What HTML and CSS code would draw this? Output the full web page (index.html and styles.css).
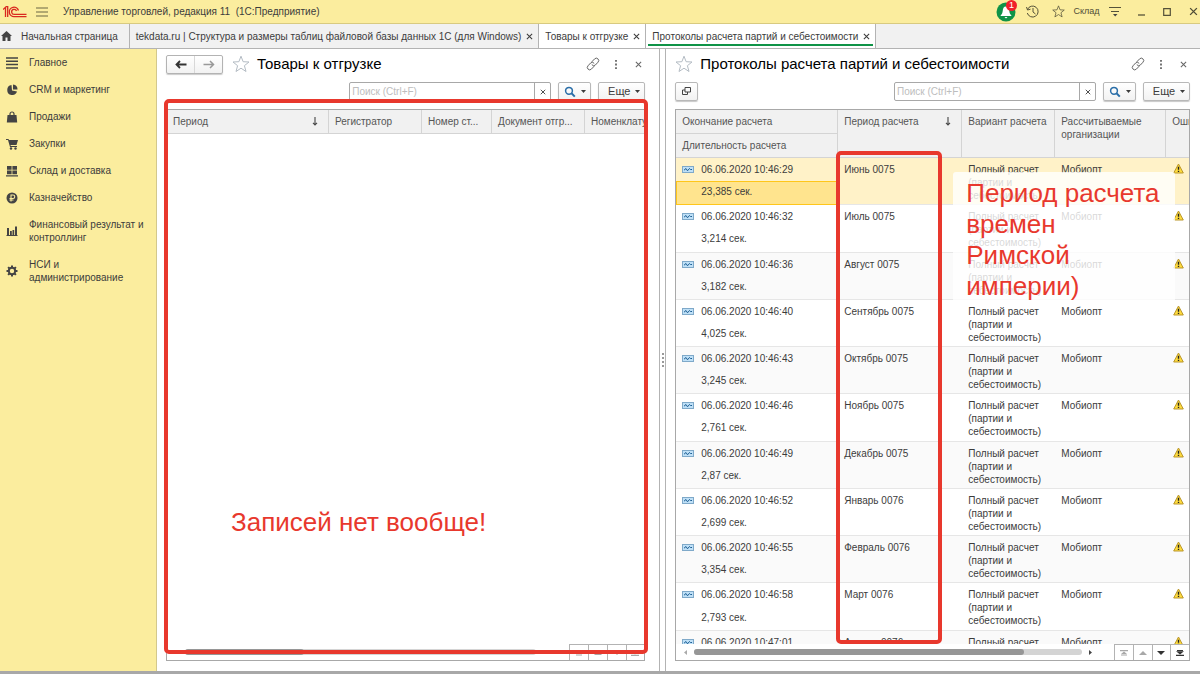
FILE: index.html
```html
<!DOCTYPE html>
<html lang="ru">
<head>
    <meta charset="UTF-8">
    <meta name="viewport" content="width=device-width, initial-scale=1.0">
    <title>Управление торговлей, редакция 11</title>
    <link rel="stylesheet" href="styles.css">
</head>
<body>
    <!-- Общие иконки -->
    <svg class="sprite" aria-hidden="true">
        <symbol id="i-star" viewBox="0 0 18 18"><path d="M9 1.2l2.1 5.5 5.9.3-4.6 3.7 1.6 5.8L9 13.2l-5 3.3 1.6-5.8L1 7l5.9-.3z" fill="none" stroke="currentColor" stroke-linejoin="miter"/></symbol>
        <symbol id="i-link" viewBox="0 0 14 14"><g fill="none" stroke="currentColor" stroke-linecap="round"><path d="M6 4.6l2.6-2.7a2.3 2.3 0 0 1 3.4 3.3L9.4 8a2.3 2.3 0 0 1-3.3 0"/><path d="M8 9.4l-2.6 2.7A2.3 2.3 0 0 1 2 8.8L4.6 6a2.3 2.3 0 0 1 3.3 0"/></g></symbol>
        <symbol id="i-dots" viewBox="0 0 4 10"><path d="M1 0h2v2H1zM1 4h2v2H1zM1 8h2v2H1z" fill="currentColor"/></symbol>
        <symbol id="i-close" viewBox="0 0 8 8"><path d="M1 1l6 6M7 1L1 7" fill="none" stroke="currentColor" stroke-width="1.2"/></symbol>
        <symbol id="i-search" viewBox="0 0 12 12"><circle cx="5" cy="4.8" r="3.4" fill="none" stroke="#2a6ea8" stroke-width="1.5"/><path d="M7.5 7.3L10.8 10.6" stroke="#2a6ea8" stroke-width="2"/></symbol>
        <symbol id="i-caret" viewBox="0 0 5 3"><path d="M0 0h5L2.5 3z" fill="currentColor"/></symbol>
        <symbol id="i-sort" viewBox="0 0 6 9"><path d="M3 0v8M1 5.8l2 2.2 2-2.2" fill="none" stroke="#444" stroke-width="1.1"/></symbol>
        <symbol id="i-record" viewBox="0 0 12 7"><rect x=".5" y=".5" width="11" height="6" fill="#bfe0f7" stroke="#7fa9c9"/><path d="M2 4.2L4 2.5 5.5 4.8 7.5 2.5 8.5 3.5H10" fill="none" stroke="#1d5f94"/></symbol>
        <symbol id="i-warn" viewBox="0 0 11 11"><path d="M5.5 1L10.3 10H.7z" fill="#ffdc3c" stroke="#b9952a" stroke-linejoin="round"/><path d="M5.5 3.8v3M5.5 7.7v1.3" stroke="#222" stroke-width="1.4"/></symbol>
        <symbol id="i-first" viewBox="0 0 8 6"><path d="M0 0h8v1.2H0zM4 1.5L7 4H1zM1 4.5h6v1H1z" fill="currentColor"/></symbol>
        <symbol id="i-up" viewBox="0 0 8 6"><path d="M4 1l4 4H0z" fill="currentColor"/></symbol>
        <symbol id="i-down" viewBox="0 0 8 6"><path d="M4 5L0 1h8z" fill="currentColor"/></symbol>
        <symbol id="i-last" viewBox="0 0 8 6"><path d="M0 4.8h8V6H0zM4 4.5L0 1.2h8zM1 0h6v1H1z" fill="currentColor"/></symbol>
    </svg>

    <header class="titlebar">
        <svg class="logo" width="24" height="12" viewBox="0 0 24 12"><g fill="none" stroke="#d9281f" stroke-width="1.3"><path d="M0 3.5L2.5 1.3V11M4.7 11V.7H2.8"/><path d="M15.5 4.5A4.7 4.7 0 1 0 11.3 10.6H23.5"/><path d="M13.5 5A2.5 2.5 0 1 0 11.3 8.4H23.5"/></g></svg>
        <button class="icon-button menu-button" aria-label="Меню"><svg width="12" height="10" viewBox="0 0 12 10"><path d="M0 1h12M0 5h12M0 9h12" stroke="#6b6745" stroke-width="1.2"/></svg></button>
        <h1 class="app-title">Управление торговлей, редакция 11&nbsp; (1С:Предприятие)</h1>
        <div class="titlebar-tools">
            <button class="tool bell" aria-label="Уведомления">
                <svg width="20" height="20" viewBox="0 0 20 20"><circle cx="10" cy="10" r="9.5" fill="#0f9347"/><path d="M10 4.5c2.5 0 3 2 3.3 4.5.2 2 .8 3.3 2 4.2v.8H4.700v-.8c1.200-.9 1.800-2.200 2-4.200C7 6.500 7.500 4.500 10 4.500zM8.500 15h3l-1.500 1.500z" fill="#fff"/></svg>
                <span class="badge">1</span>
            </button>
            <button class="tool" aria-label="История"><svg width="13" height="13" viewBox="0 0 13 13"><path d="M1.5 4.5A5.5 5.5 0 1 1 1.3 8M.5 2l1 3 3-.8M7 3v4l2.5 2" fill="none" stroke="#555239"/></svg></button>
            <button class="tool" aria-label="Избранное"><svg width="13" height="13"><use href="#i-star"/></svg></button>
            <button class="tool user">Склад</button>
            <button class="tool" aria-label="Настройки"><svg width="12" height="11" viewBox="0 0 12 11"><path d="M0 1.5h12M2 5.5h8" stroke="#555239"/><path d="M4 8h4.5L6.2 10.5z" fill="#444"/></svg></button>
            <button class="tool" aria-label="Свернуть"><svg width="8" height="9" viewBox="0 0 8 9"><path d="M1 8h7" stroke="#555239" stroke-width="1.3"/></svg></button>
            <button class="tool" aria-label="Развернуть"><svg width="8" height="8" viewBox="0 0 8 8"><path d="M.7.7h6.6v6.6H.7z" fill="none" stroke="#555239" stroke-width="1.2"/></svg></button>
            <button class="tool" aria-label="Закрыть"><svg width="9" height="9"><use href="#i-close"/></svg></button>
        </div>
    </header>

    <nav class="tabs">
        <div class="tab home">
            <svg width="11" height="10" viewBox="0 0 11 10"><path d="M5.5 0L11 5H9.5v5h-3V6.5h-2V10h-3V5H0z" fill="#444"/></svg>
            <button class="tab-label">Начальная страница</button>
        </div>
        <div class="tab">
            <button class="tab-label">tekdata.ru | Структура и размеры таблиц файловой базы данных 1С (для Windows)</button>
            <button class="icon-button" aria-label="Закрыть"><svg width="7" height="7"><use href="#i-close"/></svg></button>
        </div>
        <div class="tab open">
            <button class="tab-label">Товары к отгрузке</button>
            <button class="icon-button" aria-label="Закрыть"><svg width="7" height="7"><use href="#i-close"/></svg></button>
        </div>
        <div class="tab open active">
            <button class="tab-label">Протоколы расчета партий и себестоимости</button>
            <button class="icon-button" aria-label="Закрыть"><svg width="7" height="7"><use href="#i-close"/></svg></button>
        </div>
    </nav>

    <div class="workspace">
        <aside class="sidebar">
            <a href="#" class="section"><svg width="12" height="12" viewBox="0 0 12 12"><path d="M0 1h12M0 4.3h12M0 7.6h12M0 11h12" stroke="#444" stroke-width="1.5"/></svg>Главное</a>
            <a href="#" class="section"><svg width="12" height="12" viewBox="0 0 12 12"><path d="M5.5 1A5 5 0 1 0 11 7.5L6 6.5z" fill="#444"/><path d="M7 .5A5 5 0 0 1 11.5 5.5H7z" fill="#444"/></svg>CRM и маркетинг</a>
            <a href="#" class="section"><svg width="12" height="12" viewBox="0 0 12 12"><path d="M1.5 4h9l.7 7.5H.8z" fill="#444"/><path d="M4 5V3a2 2 0 0 1 4 0v2" fill="none" stroke="#444" stroke-width="1.2"/></svg>Продажи</a>
            <a href="#" class="section"><svg width="12" height="12" viewBox="0 0 12 12"><path d="M0 1h2.5l.5 1h9l-1.5 5H4.5l.3 1H11v1H4L2 2H0z" fill="#444"/><circle cx="5" cy="10.5" r="1.2" fill="#444"/><circle cx="9.5" cy="10.5" r="1.2" fill="#444"/></svg>Закупки</a>
            <a href="#" class="section"><svg width="12" height="12" viewBox="0 0 12 12"><path d="M1 1h4.6v3.7H1zM6.4 1H11v3.7H6.4zM1 5.5h4.6v3.7H1zM6.4 5.5H11v3.7H6.4zM0 10.2h12v1.3H0z" fill="#444"/></svg>Склад и доставка</a>
            <a href="#" class="section"><svg width="12" height="12" viewBox="0 0 12 12"><circle cx="6" cy="6" r="5.5" fill="#444"/><path d="M5 9.5V3h2a1.700 1.700 0 0 1 0 3.500H3.500M3.500 8h4" fill="none" stroke="#fbed9e" stroke-width="1.1"/></svg>Казначейство</a>
            <a href="#" class="section"><svg width="12" height="12" viewBox="0 0 12 12"><path d="M1 3h2v7H1zM4 6h1.8v4H4zM6.5 5h1.7v5H6.5zM9 1.5h2V10H9zM.5 10h11v1H.5z" fill="#444"/></svg>Финансовый результат и контроллинг</a>
            <a href="#" class="section"><svg width="12" height="12" viewBox="0 0 12 12"><circle cx="6" cy="6" r="3.2" fill="none" stroke="#444" stroke-width="2"/><path d="M6 .5v2M6 9.5v2M.5 6h2M9.5 6h2M2.1 2.1l1.4 1.4M8.5 8.5l1.4 1.4M2.1 9.9l1.4-1.4M8.5 3.5l1.4-1.4" stroke="#444" stroke-width="2"/></svg>НСИ и администрирование</a>
        </aside>

        <main class="panels">
            <section class="panel shipments">
                <div class="panel-head">
                    <div class="history">
                        <button aria-label="Назад"><svg width="12" height="9" viewBox="0 0 12 9"><path d="M11.5 4.5H1.5M5 1L1.5 4.5 5 8" fill="none" stroke="#333" stroke-width="1.8"/></svg></button>
                        <button aria-label="Вперед" class="off"><svg width="12" height="9" viewBox="0 0 12 9"><path d="M.5 4.5h10M7 1l3.5 3.5L7 8" fill="none" stroke="#999" stroke-width="1.5"/></svg></button>
                    </div>
                    <button class="icon-button star" aria-label="В избранное"><svg width="18" height="18"><use href="#i-star"/></svg></button>
                    <h2>Товары к отгрузке</h2>
                    <div class="panel-tools">
                        <button class="icon-button" aria-label="Ссылка"><svg width="14" height="14"><use href="#i-link"/></svg></button>
                        <button class="icon-button" aria-label="Еще"><svg width="4" height="9"><use href="#i-dots"/></svg></button>
                        <button class="icon-button" aria-label="Закрыть"><svg width="7" height="7"><use href="#i-close"/></svg></button>
                    </div>
                </div>
                <div class="toolbar">
                    <div class="search">
                        <input type="text" placeholder="Поиск (Ctrl+F)" aria-label="Поиск">
                        <button aria-label="Очистить"><svg width="6" height="6"><use href="#i-close"/></svg></button>
                    </div>
                    <button class="btn find" aria-label="Найти"><svg width="12" height="12"><use href="#i-search"/></svg><svg width="5" height="3"><use href="#i-caret"/></svg></button>
                    <button class="btn more">Еще<svg width="5" height="3"><use href="#i-caret"/></svg></button>
                </div>
                <div class="list">
                    <div class="list-view">
                        <table class="grid">
                            <colgroup><col class="w-date"><col class="w-reg"><col class="w-num"><col class="w-doc"><col class="w-item"></colgroup>
                            <thead>
                                <tr>
                                    <th><span class="sorted">Период<svg width="6" height="9"><use href="#i-sort"/></svg></span></th>
                                    <th>Регистратор</th>
                                    <th>Номер ст...</th>
                                    <th>Документ отгр...</th>
                                    <th>Номенклатура</th>
                                </tr>
                            </thead>
                        </table>
                    </div>
                    <div class="list-foot">
                        <div class="scroll"><span class="track"><span class="thumb short"></span></span></div>
                        <div class="pager off">
                            <button aria-label="В начало"><svg width="8" height="6"><use href="#i-first"/></svg></button>
                            <button aria-label="Вверх"><svg width="8" height="6"><use href="#i-up"/></svg></button>
                            <button aria-label="Вниз"><svg width="8" height="6"><use href="#i-down"/></svg></button>
                            <button aria-label="В конец"><svg width="8" height="6"><use href="#i-last"/></svg></button>
                        </div>
                    </div>
                </div>
                <div class="mark mark-list"></div>
                <p class="note note-empty">Записей нет вообще!</p>
            </section>

            <div class="splitter"><i></i><i></i><i></i><i></i></div>

            <section class="panel protocols">
                <div class="panel-head">
                    <button class="icon-button star" aria-label="В избранное"><svg width="18" height="18"><use href="#i-star"/></svg></button>
                    <h2>Протоколы расчета партий и себестоимости</h2>
                    <div class="panel-tools">
                        <button class="icon-button" aria-label="Ссылка"><svg width="14" height="14"><use href="#i-link"/></svg></button>
                        <button class="icon-button" aria-label="Еще"><svg width="4" height="9"><use href="#i-dots"/></svg></button>
                        <button class="icon-button" aria-label="Закрыть"><svg width="7" height="7"><use href="#i-close"/></svg></button>
                    </div>
                </div>
                <div class="toolbar">
                    <button class="btn copy" aria-label="Открыть"><svg width="9" height="9" viewBox="0 0 9 9"><path d="M3 .5h5.5v4.5H3zM5.5 5v2.5h-5V3H3" fill="none" stroke="#444"/></svg></button>
                    <div class="search">
                        <input type="text" placeholder="Поиск (Ctrl+F)" aria-label="Поиск">
                        <button aria-label="Очистить"><svg width="6" height="6"><use href="#i-close"/></svg></button>
                    </div>
                    <button class="btn find" aria-label="Найти"><svg width="12" height="12"><use href="#i-search"/></svg><svg width="5" height="3"><use href="#i-caret"/></svg></button>
                    <button class="btn more">Еще<svg width="5" height="3"><use href="#i-caret"/></svg></button>
                </div>
                <div class="list">
                    <div class="list-view">
                        <table class="grid records" id="records">
                            <colgroup><col class="w-end"><col class="w-period"><col class="w-kind"><col class="w-org"><col class="w-err"></colgroup>
                            <thead>
                                <tr>
                                    <th>Окончание расчета</th>
                                    <th rowspan="2"><span class="sorted">Период расчета<svg width="6" height="9"><use href="#i-sort"/></svg></span></th>
                                    <th rowspan="2">Вариант расчета</th>
                                    <th rowspan="2">Рассчитываемые организации</th>
                                    <th rowspan="2">Ошибки</th>
                                </tr>
                                <tr><th>Длительность расчета</th></tr>
                            </thead>
                        </table>
                    </div>
                    <div class="list-foot">
                        <div class="scroll"><svg width="3" height="5" viewBox="0 0 3 5"><path d="M3 0v5L0 2.5z" fill="#aaa"/></svg><span class="track"><span class="thumb"></span></span><svg width="3" height="5" viewBox="0 0 3 5"><path d="M0 0v5l3-2.5z" fill="#444"/></svg></div>
                        <div class="pager">
                            <button class="off" aria-label="В начало"><svg width="8" height="6"><use href="#i-first"/></svg></button>
                            <button class="off" aria-label="Вверх"><svg width="8" height="6"><use href="#i-up"/></svg></button>
                            <button aria-label="Вниз"><svg width="8" height="6"><use href="#i-down"/></svg></button>
                            <button aria-label="В конец"><svg width="8" height="6"><use href="#i-last"/></svg></button>
                        </div>
                    </div>
                </div>
                <div class="mark mark-period"></div>
                <p class="note note-period">Период расчета времен Римской империи)</p>
            </section>
        </main>
    </div>

    <script src="script.js"></script>
</body>
</html>
```

FILE: styles.css
```css
* {
    box-sizing: border-box;
}

body {
    margin: 0;
    height: 100vh;
    display: flex;
    flex-direction: column;
    overflow: hidden;
    font-family: "Liberation Sans", Arial, sans-serif;
    font-size: 10px;
    line-height: 13px;
    color: #3c3c3c;
    background: #ffffff;
    border-bottom: 3px solid #a8a8a8;
}

h1, h2, p {
    margin: 0;
    font-weight: normal;
}

button, input {
    font: inherit;
    color: inherit;
    margin: 0;
    padding: 0;
    border: none;
    background: none;
}

svg {
    display: block;
    flex: none;
}

.sprite {
    position: absolute;
    width: 0;
    height: 0;
}

.icon-button {
    display: flex;
    align-items: center;
    justify-content: center;
}

/* Заголовок окна */
.titlebar {
    flex: none;
    display: flex;
    align-items: center;
    height: 24px;
    padding-left: 3px;
    background: #fbed9e;
    border-bottom: 1px solid #d8ca80;
    overflow: hidden;
}

.menu-button {
    margin: 0 15px 0 9px;
}

.app-title {
    font-size: 10px;
}

.titlebar-tools {
    display: flex;
    margin-left: auto;
    margin-right: -6px;
}

.tool {
    width: 26px;
    height: 23px;
    display: flex;
    align-items: center;
    justify-content: center;
    color: #4f4c36;
}

.tool.user {
    width: 31px;
    font-size: 9px;
}

.bell {
    position: relative;
}

.badge {
    position: absolute;
    top: 0;
    right: 2px;
    width: 11px;
    height: 11px;
    border-radius: 50%;
    background: #f0202a;
    color: #ffffff;
    font-size: 9px;
    line-height: 11px;
    text-align: center;
}

/* Вкладки */
.tabs {
    flex: none;
    display: flex;
    height: 25px;
    background: #f1f1f1;
    border-bottom: 1px solid #b3b3b3;
}

.tab {
    position: relative;
    display: flex;
    align-items: center;
    gap: 5px;
    padding: 0 5px 0 6px;
    border-right: 1px solid #b3b3b3;
    white-space: nowrap;
}

.tab.home {
    gap: 9px;
    padding: 0 11px 0 1px;
}

.tab.open {
    background: #ffffff;
}

.tab.active::after {
    content: "";
    position: absolute;
    left: 2px;
    right: 2px;
    bottom: 2px;
    height: 2px;
    background: #0f9347;
}

/* Рабочая область */
.workspace {
    flex: 1;
    min-height: 0;
    display: flex;
}

.sidebar {
    flex: none;
    width: 157px;
    background: #fbed9e;
    border-right: 1px solid #d3c88c;
}

.section {
    display: flex;
    align-items: center;
    gap: 11px;
    padding: 7px 8px 7px 6px;
    color: #3c3c3c;
    text-decoration: none;
}

.panels {
    flex: 1;
    min-width: 0;
    display: flex;
}

.panel {
    position: relative;
    display: flex;
    flex-direction: column;
    gap: 8px;
    min-width: 0;
    padding: 5px 10px 10px 9px;
}

.shipments {
    flex: 500;
    padding-right: 14px;
}

.protocols {
    flex: 537;
}

.splitter {
    flex: none;
    width: 7px;
    display: flex;
    flex-direction: column;
    align-items: center;
    justify-content: center;
    gap: 2px;
    border: solid #b3b3b3;
    border-width: 0 1px;
}

.splitter i {
    width: 2px;
    height: 2px;
    background: #999999;
}

.panel-head {
    flex: none;
    display: flex;
    align-items: center;
    height: 20px;
}

.panel-head h2 {
    margin-left: 7px;
    font-size: 15px;
    line-height: 20px;
    color: #000000;
    white-space: nowrap;
}

.star {
    color: #b4bcc4;
}

.history {
    display: flex;
    width: 57px;
    height: 19px;
    margin-right: 9px;
    border: 1px solid #b3b3b3;
    border-radius: 2px;
    background: linear-gradient(#ffffff, #f2f2f2);
    box-shadow: 0 1px 1px #cccccc;
}

.history button {
    flex: 1;
    display: flex;
    align-items: center;
    justify-content: center;
}

.history .off {
    border-left: 1px solid #d8d8d8;
}

.panel-tools {
    display: flex;
    margin-left: auto;
    margin-right: -5px;
    color: #666666;
}

.panel-tools .icon-button {
    width: 23px;
}

.toolbar {
    flex: none;
    display: flex;
    justify-content: flex-end;
    gap: 7px;
    height: 19px;
}

.search {
    display: flex;
    width: 202px;
    border: 1px solid #a8a8a8;
    border-radius: 2px;
}

.search input {
    flex: 1;
    min-width: 0;
    padding-left: 2px;
}

.search input::placeholder {
    color: #bdbdbd;
}

.search button {
    width: 16px;
    display: flex;
    align-items: center;
    justify-content: center;
    border-left: 1px solid #a8a8a8;
}

.btn {
    display: flex;
    align-items: center;
    justify-content: center;
    gap: 5px;
    border: 1px solid #b8b8b8;
    border-radius: 2px;
    background: linear-gradient(#ffffff, #f2f2f2);
    box-shadow: 0 1px 1px #c8c8c8;
}

.find {
    width: 33px;
}

.more {
    width: 47px;
    font-size: 11px;
    padding-left: 5px;
}

.copy {
    width: 23px;
    margin-right: auto;
}

/* Списки */
.list {
    flex: 1;
    min-height: 0;
    display: flex;
    flex-direction: column;
    border: 1px solid #a8a8a8;
}

.list-view {
    flex: 1;
    min-height: 0;
    overflow: hidden;
}

.grid {
    width: 0;
    min-width: 100%;
    table-layout: fixed;
    border-collapse: separate;
    border-spacing: 0;
}

.w-date { width: 162px; }
.w-reg { width: 93px; }
.w-num { width: 70px; }
.w-doc { width: 93px; }
.w-item { width: 100px; }
.w-end { width: 162px; }
.w-period { width: 124px; }
.w-kind { width: 93px; }
.w-org { width: 111px; }
.w-err { width: 60px; }

.grid th,
.grid td {
    padding: 5px 6px 0;
    text-align: left;
    vertical-align: top;
    font-weight: normal;
}

.grid th {
    height: 24px;
    color: #555555;
    background: #f1f1f1;
    border-right: 1px solid #d4d4d4;
    border-bottom: 1px solid #d4d4d4;
    white-space: nowrap;
}

.records th {
    white-space: normal;
}

.grid td {
    height: 23px;
}

.grid td[rowspan],
.grid .time {
    border-bottom: 1px solid #e6e6e6;
}

.grid .time {
    height: 24px;
    padding: 4px 6px 0 25px;
}

.records {
    height: 568px;
}

.records thead tr {
    height: 24px;
}

.grid td.err {
    padding-left: 7px;
}

.sorted {
    display: flex;
    justify-content: space-between;
    align-items: center;
    padding-right: 4px;
}

.stamp {
    display: flex;
    align-items: center;
    gap: 7px;
}

tbody:nth-of-type(odd) td {
    background: #fafafa;
}

tbody.selected td {
    background: #fff2c8;
}

tbody.selected td.time {
    background: #ffe48e;
    border: 1px solid #ffc61a;
    padding: 3px 6px 0 24px;
}

.list-foot {
    flex: none;
    display: flex;
    justify-content: space-between;
    height: 16px;
}

.scroll {
    flex: 1;
    display: flex;
    align-items: center;
    gap: 7px;
    padding: 0 22px 0 8px;
}

.track {
    flex: 1;
    height: 6px;
    border-radius: 3px;
    background: #d4d4d4;
}

.thumb {
    display: block;
    width: 85%;
    height: 6px;
    border-radius: 3px;
    background: #969696;
}

.shipments .scroll {
    padding: 0 33px 0 18px;
}

.thumb.short {
    width: 34%;
}

.pager {
    display: flex;
    width: 75px;
    border-top: 1px solid #b3b3b3;
    color: #333333;
}

.pager button {
    flex: 1;
    display: flex;
    align-items: center;
    justify-content: center;
    border-left: 1px solid #b3b3b3;
}

.pager.off,
.pager .off {
    color: #a8a8a8;
}

/* Пометки поверх окон */
.mark {
    position: absolute;
    border: 4px solid #e8382d;
    border-radius: 5px;
    pointer-events: none;
}

.mark-list {
    top: 50px;
    right: 11px;
    bottom: 17px;
    left: 7px;
}

.mark-period {
    top: 102px;
    bottom: 27px;
    left: 170px;
    width: 106px;
}

.note {
    position: absolute;
    font-size: 26px;
    line-height: 31px;
    color: #e8382d;
}

.note-empty {
    top: 458px;
    left: 74px;
}

.note-period {
    top: 123px;
    left: 287px;
    width: 222px;
    padding: 6px 12px 0 13px;
    border-radius: 3px;
    background: rgba(255, 255, 255, 0.8);
}
```

FILE: script.js
```js
const records = [
    ['06.06.2020 10:46:29', '23,385', 'Июнь 0075'],
    ['06.06.2020 10:46:32', '3,214', 'Июль 0075'],
    ['06.06.2020 10:46:36', '3,182', 'Август 0075'],
    ['06.06.2020 10:46:40', '4,025', 'Сентябрь 0075'],
    ['06.06.2020 10:46:43', '3,245', 'Октябрь 0075'],
    ['06.06.2020 10:46:46', '2,761', 'Ноябрь 0075'],
    ['06.06.2020 10:46:49', '2,87', 'Декабрь 0075'],
    ['06.06.2020 10:46:52', '2,699', 'Январь 0076'],
    ['06.06.2020 10:46:55', '3,354', 'Февраль 0076'],
    ['06.06.2020 10:46:58', '2,793', 'Март 0076'],
    ['06.06.2020 10:47:01', '', 'Апрель 0076']
];

const table = document.getElementById('records');

// Каждая запись занимает две строки: дата и длительность
records.forEach(([end, time, period], index) => {
    const body = document.createElement('tbody');
    if (index === 0) {
        body.classList.add('selected');
    }
    body.innerHTML = `
        <tr>
            <td><span class="stamp"><svg width="12" height="7"><use href="#i-record"/></svg>${end}</span></td>
            <td rowspan="2">${period}</td>
            <td rowspan="2">Полный расчет (партии и себестоимость)</td>
            <td rowspan="2">Мобиопт</td>
            <td rowspan="2" class="err"><svg width="11" height="11"><use href="#i-warn"/></svg></td>
        </tr>
        <tr><td class="time">${time ? time + ' сек.' : ''}</td></tr>`;
    table.appendChild(body);
});
```
